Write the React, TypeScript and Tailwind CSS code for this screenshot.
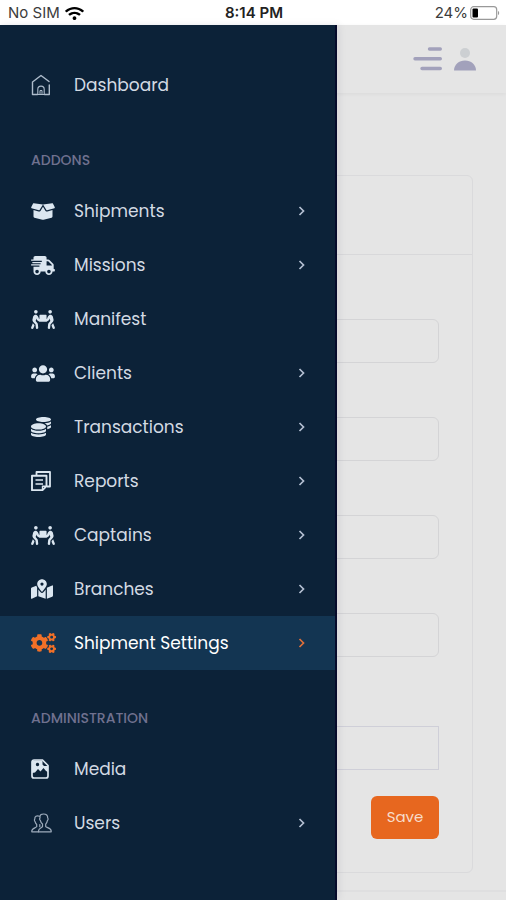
import type { ReactNode } from "react";
import {
  FaBoxOpen,
  FaShippingFast,
  FaPeopleCarry,
  FaUsers,
  FaCoins,
  FaMapMarkedAlt,
  FaCogs,
  FaWifi,
} from "react-icons/fa";

function HomeIcon() {
  return (
    <svg width="20" height="22" viewBox="0 0 20 22" fill="none" stroke="currentColor" strokeWidth="1.4" strokeLinecap="round" strokeLinejoin="round">
      <path d="M6.5 20.5H1.5V8L10 1.5 18 7.500M18.3 11v9.5h-4.8" />
      <path d="M6.8 20.5v-5.2a3.2 3.2 0 0 1 6.4 0v5.2z" strokeWidth="1.1" />
      <path d="M9 20.5v-4h2v4" strokeWidth="1" />
    </svg>
  );
}

function ReportsIcon() {
  return (
    <svg width="20" height="20" viewBox="0 0 20 20" fill="none" stroke="currentColor" strokeLinejoin="round">
      <path d="M5.500 4V1H19v14.500h-3" strokeWidth="1.8" />
      <path d="M1 4.700h14.500v10.500l-4 4H1z" strokeWidth="1.900" />
      <path d="M4.500 9h7.500M4.500 13h7.500" strokeWidth="1.6" />
      <path d="M11.500 19v-3.800h4" strokeWidth="1.4" />
    </svg>
  );
}

function MediaIcon() {
  return (
    <svg width="18" height="20" viewBox="0 0 18 20" fill="none">
      <path d="M3 1h8.500L17 6.500V17a2 2 0 0 1-2 2H3a2 2 0 0 1-2-2V3a2 2 0 0 1 2-2z" stroke="currentColor" strokeWidth="1.7" />
      <path fillRule="evenodd" d="M1 1.500h10.500v4L13 7h4v6l-2-1-2.500-3-3 3.500L7 10l-3 3.500L1 14zM6.500 3.800a1.700 1.700 0 1 0 0 3.400 1.700 1.700 0 0 0 0-3.400z" fill="currentColor" />
    </svg>
  );
}

function PeopleIcon() {
  return (
    <svg width="21" height="20" viewBox="0 0 21 20" fill="none" stroke="currentColor" strokeWidth="1.2" strokeLinejoin="round" strokeLinecap="round">
      <path d="M9 3C9.300 1.500 10.500 1 12.500 1c2.800 0 4.300 1.300 4.200 4 .6.300.5 2-.3 2.600-.3 1.600-.9 2.700-1.700 3.500v2.500c1 1.200 5.500 1.500 5.500 4.400v.8H7.500V18c0-2.900 3.300-3.200 4-4.400v-2.500C10.300 10.200 9.700 9 9.400 7.600 8.500 7 8.400 5.500 9 5z" />
      <path d="M8.500 3.300C5.500 2.300 3.600 3.500 3.800 6c-.6.500-.4 2 .2 2.400.3 1.300.8 2.300 1.700 3.100v2.200C4.700 15 .8 15.200.8 18v.8h6.700M8.800 11.500v2.200" />
    </svg>
  );
}

function Chevron() {
  return (
    <svg width="7" height="10" viewBox="0 0 7 10" fill="none" stroke="currentColor" strokeWidth="1.7" aria-hidden="true">
      <path d="M1.500 1l4 4-4 4" />
    </svg>
  );
}

type Item = { label: string; icon: ReactNode; more?: boolean; active?: boolean };

const addons: Item[] = [
  { label: "Shipments", icon: <FaBoxOpen className="h-[19px] w-6" />, more: true },
  { label: "Missions", icon: <FaShippingFast className="h-[19px] w-6" />, more: true },
  { label: "Manifest", icon: <FaPeopleCarry className="h-[19px] w-6" /> },
  { label: "Clients", icon: <FaUsers className="h-[19px] w-6" />, more: true },
  { label: "Transactions", icon: <FaCoins className="size-5" />, more: true },
  { label: "Reports", icon: <ReportsIcon />, more: true },
  { label: "Captains", icon: <FaPeopleCarry className="h-[19px] w-6" />, more: true },
  { label: "Branches", icon: <FaMapMarkedAlt className="h-5 w-[22px]" />, more: true },
  { label: "Shipment Settings", icon: <FaCogs className="h-5 w-[25px]" />, more: true, active: true },
];

const administration: Item[] = [
  { label: "Media", icon: <MediaIcon /> },
  { label: "Users", icon: <span className="text-[#9dabbb]"><PeopleIcon /></span>, more: true },
];

function NavItem({ item }: { item: Item }) {
  return (
    <li>
      <a
        href="#"
        className={
          item.active
            ? "flex h-[54px] items-center bg-[#133552] pr-[30px] pl-[31px] text-white"
            : "flex h-[54px] items-center pr-[30px] pl-[31px] text-[#d3dae3]"
        }
      >
        <span className={item.active ? "flex w-[43px] text-[#f17027]" : "flex w-[43px] text-[#dbe6f0]"}>{item.icon}</span>
        <span className="pt-[2px]">{item.label}</span>
        {item.more && (
          <span className={item.active ? "ml-auto text-[#e0703a]" : "ml-auto text-[#b5c0d2]"}>
            <Chevron />
          </span>
        )}
      </a>
    </li>
  );
}

function NavHeading({ children }: { children: ReactNode }) {
  return <h2 className="flex h-[72px] items-center px-[31px] pt-6 text-sm font-medium text-[#70718f]">{children}</h2>;
}

function Sidebar() {
  return (
    <nav className="absolute inset-y-0 left-0 w-2/3 border-r-2 border-[#060b2b] bg-[#0c2238] pt-[33px] text-[17px] shadow-[2px_0_8px_rgba(20,20,70,0.08)]">
      <ul>
        <NavItem item={{ label: "Dashboard", icon: <span className="text-[#aebccb]"><HomeIcon /></span> }} />
      </ul>
      <NavHeading>ADDONS</NavHeading>
      <ul>
        {addons.map((item) => (
          <NavItem key={item.label} item={item} />
        ))}
      </ul>
      <NavHeading>ADMINISTRATION</NavHeading>
      <ul>
        {administration.map((item) => (
          <NavItem key={item.label} item={item} />
        ))}
      </ul>
    </nav>
  );
}

function StatusBar() {
  return (
    <div className="grid h-[25px] grid-cols-3 items-center bg-white pt-px pr-[6px] pl-2 font-[Inter,sans-serif] text-[15px] text-[#3c3c3c]">
      <div className="flex items-center gap-[5px]">
        <span>No SIM</span>
        <FaWifi className="h-[15px] w-[19px] text-black" />
      </div>
      <div className="text-center font-semibold text-[#222222]">8:14 PM</div>
      <div className="flex items-center justify-end gap-[2px]">
        <span>24%</span>
        <svg width="30" height="14" viewBox="0 0 30 14" fill="none" aria-hidden="true">
          <rect x="0.700" y="0.700" width="26" height="12.600" rx="3" stroke="#999" strokeWidth="1.200" />
          <rect x="2.500" y="2.500" width="5.500" height="9" rx="1" fill="#000" />
          <path d="M28 5v4c1.500-.4 1.500-3.600 0-4z" fill="#999" />
        </svg>
      </div>
    </div>
  );
}

const fields = ["Prefix", "Code length", "Default tax", "Default insurance"];

export default function App() {
  return (
    <div className="flex min-h-screen flex-col bg-[#e5e5e5] font-[Poppins,Inter,sans-serif]">
      <StatusBar />
      <div className="relative flex grow flex-col">
        <header className="flex h-[68px] items-center justify-end gap-3 pr-[30px] shadow-[0_1px_4px_rgba(0,0,0,0.05)]">
          <button type="button" aria-label="Toggle menu">
            <svg width="29" height="24" viewBox="0 0 29 24" stroke="#a2a1bb" strokeWidth="3.400" strokeLinecap="round">
              <path d="M16.500 2H27.300M2 11.800H27.300M9 21.500H27.300" />
            </svg>
          </button>
          <button type="button" aria-label="Account">
            <svg width="22" height="24" viewBox="0 0 22 24">
              <circle cx="11" cy="6" r="5" fill="#cccfd2" />
              <path d="M0 23.500C0 17.500 5 13.500 11 13.500S22 17.500 22 23.500z" fill="#a2a1bb" />
            </svg>
          </button>
        </header>
        <form className="mx-[33px] mt-[82px] mb-[17px] rounded-md border border-[#dadadc]">
          <div className="h-[79px] border-b border-[#d8d8da]" />
          <div className="px-[33px] pt-[10px] pb-[33px]">
            {fields.map((name) => (
              <input
                key={name}
                aria-label={name}
                className="mt-[54px] block h-11 w-full rounded-md border border-[#d4d4d6] bg-transparent px-3"
              />
            ))}
            <input aria-label="Default branch" className="mt-[69px] block h-11 w-full border border-[#cfcfd8] bg-transparent px-3" />
            <button type="button" className="mt-[26px] ml-auto block h-[43px] w-[68px] rounded-md bg-[#e7671f] text-[15px] text-[#f7dccb]">
              Save
            </button>
          </div>
        </form>
        <footer className="h-[10px] border-t-2 border-[#dfdfe0]" />
        <Sidebar />
      </div>
    </div>
  );
}
